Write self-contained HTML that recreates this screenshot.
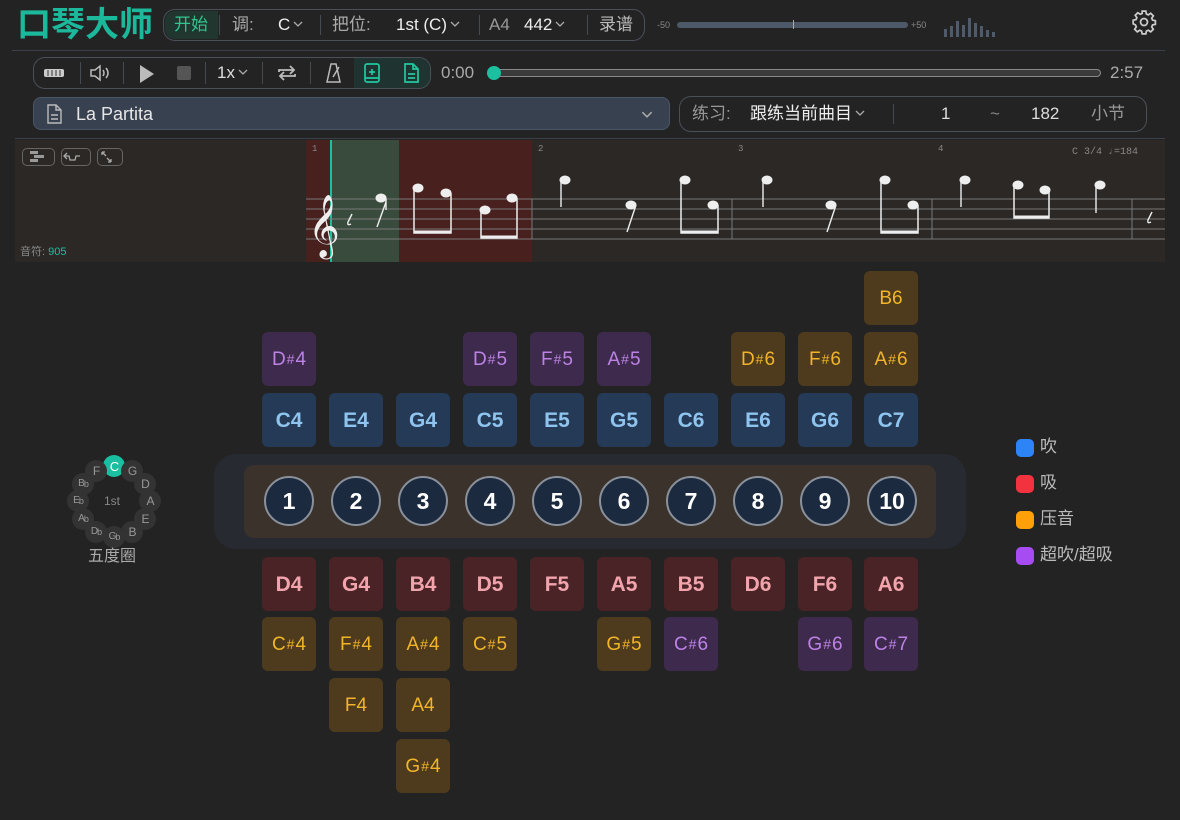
<!DOCTYPE html>
<html><head><meta charset="utf-8"><style>
*{margin:0;padding:0;box-sizing:border-box}
body{width:1180px;height:820px;background:#232323;font-family:"Liberation Sans","Noto Sans CJK SC",sans-serif;color:#ddd;position:relative;overflow:hidden}
.a{position:absolute}
.k{position:absolute;width:54px;height:54px;border-radius:6px;display:flex;align-items:center;justify-content:center;font-size:19px;line-height:1}
.k small{font-size:14px;margin:0 1px}
.b{background:#243a56;color:#8fc4ef;font-weight:bold;font-size:21px}
.d{background:#4a2327;color:#f2a4ad;font-weight:bold;font-size:21px}
.o{background:#4e3b1d;color:#f2b52a}
.p{background:#3e2a4d;color:#bd82e6}
.h{position:absolute;width:50px;height:50px;border-radius:50%;background:#1c2a3f;border:2px solid #8a919b;color:#fff;font-weight:bold;font-size:23px;display:flex;align-items:center;justify-content:center;top:476px}
.pill{position:absolute;border:1px solid #4a4f58;border-radius:12px}
.sep{position:absolute;width:1px;background:#444a52}
.t{position:absolute;white-space:nowrap;line-height:20px}
.cf{position:absolute;width:22px;height:22px;border-radius:50%;background:#333;color:#999;font-size:12px;display:flex;align-items:center;justify-content:center;line-height:1;letter-spacing:-1px}
.cf i{font-style:normal;font-size:9px}
.cv{display:inline-block;width:10px;height:6px;vertical-align:middle;margin-left:3px;margin-top:-3px}
</style></head><body>
<svg width="0" height="0" style="position:absolute"><defs><symbol id="cv" viewBox="0 0 10 6"><path d="M1 1l4 4 4-4" fill="none" stroke="#aaa" stroke-width="1.3"/></symbol></defs></svg>
<div class="t" style="left:17px;top:7px;font-size:34px;line-height:36px;font-weight:bold;color:#1cb89b">口琴大师</div>
<div class="pill" style="left:163px;top:9px;width:482px;height:32px"></div>
<div class="a" style="left:165px;top:11px;width:53px;height:28px;background:#20362e;border-radius:10px 0 0 10px"></div>
<div class="t" style="left:174px;top:15px;font-size:17px;color:#2fc591">开始</div>
<div class="sep" style="left:219px;top:15px;height:20px"></div>
<div class="t" style="left:232px;top:15px;font-size:17px;color:#aaa">调:</div>
<div class="t" style="left:278px;top:15px;font-size:17px;color:#eee">C<svg class="cv"><use href="#cv"/></svg></div>
<div class="sep" style="left:320px;top:15px;height:20px"></div>
<div class="t" style="left:332px;top:15px;font-size:17px;color:#aaa">把位:</div>
<div class="t" style="left:396px;top:15px;font-size:17px;color:#eee">1st (C)<svg class="cv"><use href="#cv"/></svg></div>
<div class="sep" style="left:479px;top:15px;height:20px"></div>
<div class="t" style="left:489px;top:15px;font-size:17px;color:#999">A4</div>
<div class="t" style="left:524px;top:15px;font-size:17px;color:#eee">442<svg class="cv"><use href="#cv"/></svg></div>
<div class="sep" style="left:587px;top:15px;height:20px"></div>
<div class="t" style="left:599px;top:15px;font-size:17px;color:#bbb">录谱</div>
<div class="t" style="left:657px;top:15px;font-size:9px;color:#888">-50</div>
<div class="a" style="left:677px;top:22px;width:231px;height:6px;background:#4d5869;border-radius:3px"></div>
<div class="a" style="left:793px;top:20px;width:1px;height:9px;background:#aaa"></div>
<div class="t" style="left:911px;top:15px;font-size:9px;color:#888">+50</div>
<svg class="a" style="left:942px;top:17px" width="56" height="20"><g fill="#4f5a6a"><rect x="2" y="12" width="3" height="8"/><rect x="8" y="9" width="3" height="11"/><rect x="14" y="4" width="3" height="16"/><rect x="20" y="8" width="3" height="12"/><rect x="26" y="1" width="3" height="19"/><rect x="32" y="6" width="3" height="14"/><rect x="38" y="9" width="3" height="11"/><rect x="44" y="13" width="3" height="7"/><rect x="50" y="15" width="3" height="5"/></g></svg>
<svg class="a" style="left:1131px;top:9px" width="26" height="26" viewBox="0 0 24 24" fill="none" stroke="#ccc" stroke-width="1.6"><path d="M10.3 2h3.4l.5 2.6 1.8.8 2.2-1.5 2.4 2.4-1.5 2.2.8 1.8 2.6.5v3.4l-2.6.5-.8 1.8 1.5 2.2-2.4 2.4-2.2-1.5-1.8.8-.5 2.6h-3.4l-.5-2.6-1.8-.8-2.2 1.5-2.4-2.4 1.5-2.2-.8-1.8L2 13.7v-3.4l2.6-.5.8-1.8-1.5-2.2 2.4-2.4 2.2 1.5 1.8-.8z"/><circle cx="12" cy="12" r="3.2"/></svg>
<div class="a" style="left:12px;top:50px;width:1153px;height:1px;background:#3a404a"></div>

<div class="pill" style="left:33px;top:57px;width:398px;height:32px"></div>
<div class="a" style="left:354px;top:58px;width:76px;height:30px;background:#1f3430;border-radius:0 11px 11px 0"></div>
<svg class="a" style="left:43px;top:67px" width="22" height="12"><rect x="1" y="2" width="20" height="8" rx="2" fill="#ccc"/><g stroke="#333"><line x1="5" y1="3" x2="5" y2="9"/><line x1="9" y1="3" x2="9" y2="9"/><line x1="13" y1="3" x2="13" y2="9"/><line x1="17" y1="3" x2="17" y2="9"/></g></svg>
<div class="sep" style="left:80px;top:62px;height:22px"></div>
<svg class="a" style="left:88px;top:63px" width="24" height="20" fill="none" stroke="#bbb" stroke-width="1.5"><path d="M3 7h4l5-4v14l-5-4H3z"/><path d="M15 7q2 3 0 6M18 5q4 5 0 10"/></svg>
<div class="sep" style="left:123px;top:62px;height:22px"></div>
<svg class="a" style="left:138px;top:64px" width="18" height="20"><path d="M2 1L16 10L2 19Z" fill="#bbb"/></svg>
<div class="a" style="left:177px;top:66px;width:14px;height:14px;background:#555;border-radius:2px"></div>
<div class="sep" style="left:205px;top:62px;height:22px"></div>
<div class="t" style="left:217px;top:63px;font-size:17px;color:#ddd">1x<svg class="cv"><use href="#cv"/></svg></div>
<div class="sep" style="left:262px;top:62px;height:22px"></div>
<svg class="a" style="left:276px;top:63px" width="22" height="20" fill="none" stroke="#bbb" stroke-width="1.8"><path d="M3 9V7h14M14 3l4 4-4 4M19 11v2H5M8 17l-4-4 4-4"/></svg>
<div class="sep" style="left:310px;top:62px;height:22px"></div>
<svg class="a" style="left:325px;top:62px" width="18" height="22" fill="none" stroke="#bbb" stroke-width="1.5"><path d="M6 2h5l4 18H2z"/><path d="M8 15l6-10"/></svg>
<svg class="a" style="left:362px;top:62px" width="20" height="22" fill="none" stroke="#22c8a0" stroke-width="1.7"><rect x="3" y="2" width="14" height="18" rx="2"/><path d="M10 7v6M7 10h6M3 16h14"/></svg>
<svg class="a" style="left:401px;top:62px" width="20" height="22" fill="none" stroke="#22c8a0" stroke-width="1.7"><path d="M4 2h8l5 5v13H4z M12 2v5h5M7 12h7M7 16h7"/></svg>
<div class="t" style="left:441px;top:63px;font-size:17px;color:#aaa">0:00</div>
<div class="a" style="left:489px;top:69px;width:612px;height:8px;border:1.5px solid #888;border-radius:4px;background:#3a3a3a"></div>
<div class="a" style="left:487px;top:66px;width:14px;height:14px;border-radius:50%;background:#1cc0a0"></div>
<div class="t" style="left:1110px;top:63px;font-size:17px;color:#aaa">2:57</div>

<div class="a" style="left:33px;top:97px;width:637px;height:33px;background:#38414f;border:1px solid #4a5566;border-radius:8px"></div>
<svg class="a" style="left:45px;top:104px" width="18" height="20" fill="none" stroke="#bbb" stroke-width="1.4"><path d="M3 1h8l5 5v13H3z M11 1v5h5M6 11h7M6 15h7"/></svg>
<div class="t" style="left:76px;top:104px;font-size:18px;color:#e6e6e6">La Partita</div>
<svg class="a" style="left:641px;top:111px" width="12" height="7"><use href="#cv"/></svg>
<div class="pill" style="left:679px;top:96px;width:468px;height:36px"></div>
<div class="t" style="left:692px;top:104px;font-size:17px;color:#999">练习:</div>
<div class="t" style="left:750px;top:104px;font-size:17px;color:#eee">跟练当前曲目<svg class="cv"><use href="#cv"/></svg></div>
<div class="sep" style="left:893px;top:104px;height:20px"></div>
<div class="t" style="left:941px;top:104px;font-size:17px;color:#ddd">1</div>
<div class="t" style="left:990px;top:104px;font-size:17px;color:#888">~</div>
<div class="t" style="left:1031px;top:104px;font-size:17px;color:#ddd">182</div>
<div class="t" style="left:1091px;top:104px;font-size:17px;color:#999">小节</div>
<div class="a" style="left:15px;top:138px;width:1150px;height:1px;background:#3a404a"></div>

<div class="a" style="left:15px;top:140px;width:1150px;height:122px;background:#2b2826"></div>
<div class="a" style="left:306px;top:140px;width:25px;height:122px;background:#48211f"></div>
<div class="a" style="left:331px;top:140px;width:68px;height:122px;background:#394b3c"></div>
<div class="a" style="left:399px;top:140px;width:133px;height:122px;background:#48211f"></div>
<div class="a" style="left:330px;top:140px;width:2px;height:122px;background:#1cc0a0"></div>
<div class="a" style="left:22px;top:148px;width:33px;height:18px;border:1px solid #666;border-radius:5px"></div>
<div class="a" style="left:61px;top:148px;width:30px;height:18px;border:1px solid #666;border-radius:5px"></div>
<div class="a" style="left:97px;top:148px;width:26px;height:18px;border:1px solid #666;border-radius:5px"></div>
<svg class="a" style="left:22px;top:148px" width="102" height="18" fill="none" stroke="#aaa" stroke-width="1.3"><g fill="#999" stroke="none"><rect x="8" y="3" width="8" height="3"/><rect x="12" y="7" width="10" height="3"/><rect x="8" y="11" width="8" height="3"/></g><path d="M45 5l-3 3 3 3M42 8h5l1 4h5l1-4h4"/><path d="M80 4h3M80 4v3M80 4l4 4M89 14h-3M89 14v-3M89 14l-4-4"/></svg>
<div class="t" style="left:20px;top:242px;font-size:11px;color:#888">音符: <span style="color:#1cc0a0">905</span></div>
<svg class="a" style="left:300px;top:140px" width="865" height="122">
<g stroke="#777" stroke-width="1"><line x1="6" y1="59" x2="865" y2="59"/><line x1="6" y1="69" x2="865" y2="69"/><line x1="6" y1="79" x2="865" y2="79"/><line x1="6" y1="89" x2="865" y2="89"/><line x1="6" y1="99" x2="865" y2="99"/>
<line x1="232" y1="59" x2="232" y2="99"/><line x1="432" y1="59" x2="432" y2="99"/><line x1="632" y1="59" x2="632" y2="99"/><line x1="832" y1="59" x2="832" y2="99"/></g>
<g fill="#888" font-size="9" font-family="Liberation Mono"><text x="12" y="11">1</text><text x="238" y="11">2</text><text x="438" y="11">3</text><text x="638" y="11">4</text><text x="772" y="14" font-size="10">C  3/4  ♩=184</text></g>
<text x="8" y="104" font-size="54" fill="#eee" font-family="DejaVu Serif">𝄞</text>
<g fill="#eee" stroke="#eee">
<path d="M52 74l-4 8q-1 4 3 2" fill="none" stroke-width="1.4"/>
<ellipse cx="81" cy="58" rx="5" ry="4"/><line x1="86" y1="58" x2="86" y2="70" stroke-width="1.4"/><line x1="86" y1="62" x2="77" y2="87" stroke-width="1.4"/>
<ellipse cx="118" cy="48" rx="5" ry="4"/><ellipse cx="146" cy="53" rx="5" ry="4"/><path d="M114 48V93H151V53" fill="none" stroke-width="1.5"/><line x1="114" y1="92" x2="151" y2="92" stroke-width="3"/>
<ellipse cx="185" cy="70" rx="5" ry="4"/><ellipse cx="212" cy="58" rx="5" ry="4"/><path d="M181 70V98H217V58" fill="none" stroke-width="1.5"/><line x1="181" y1="97" x2="217" y2="97" stroke-width="3"/>
<ellipse cx="265" cy="40" rx="5" ry="4"/><line x1="261" y1="40" x2="261" y2="67" stroke-width="1.4"/>
<ellipse cx="331" cy="65" rx="5" ry="4"/><line x1="336" y1="65" x2="327" y2="92" stroke-width="1.4"/>
<ellipse cx="385" cy="40" rx="5" ry="4"/><ellipse cx="413" cy="65" rx="5" ry="4"/><path d="M381 40V93H418V65" fill="none" stroke-width="1.5"/><line x1="381" y1="92" x2="418" y2="92" stroke-width="3"/>
<ellipse cx="467" cy="40" rx="5" ry="4"/><line x1="463" y1="40" x2="463" y2="67" stroke-width="1.4"/>
<ellipse cx="531" cy="65" rx="5" ry="4"/><line x1="536" y1="65" x2="527" y2="92" stroke-width="1.4"/>
<ellipse cx="585" cy="40" rx="5" ry="4"/><ellipse cx="613" cy="65" rx="5" ry="4"/><path d="M581 40V93H618V65" fill="none" stroke-width="1.5"/><line x1="581" y1="92" x2="618" y2="92" stroke-width="3"/>
<ellipse cx="665" cy="40" rx="5" ry="4"/><line x1="661" y1="40" x2="661" y2="67" stroke-width="1.4"/>
<ellipse cx="718" cy="45" rx="5" ry="4"/><ellipse cx="745" cy="50" rx="5" ry="4"/><path d="M714 45V78H749V50" fill="none" stroke-width="1.5"/><line x1="714" y1="77" x2="749" y2="77" stroke-width="3"/>
<ellipse cx="800" cy="45" rx="5" ry="4"/><line x1="796" y1="45" x2="796" y2="73" stroke-width="1.4"/>
<path d="M852 72l-4 8q-1 4 3 2" fill="none" stroke-width="1.4"/>
</g></svg>

<div class="cf" style="left:103px;top:455px;background:#19bfa0;color:#fff;font-size:13px">C</div>
<div class="cf" style="left:121px;top:460px">G</div>
<div class="cf" style="left:134px;top:473px">D</div>
<div class="cf" style="left:139px;top:490px">A</div>
<div class="cf" style="left:134px;top:508px">E</div>
<div class="cf" style="left:121px;top:521px">B</div>
<div class="cf" style="left:103px;top:526px;font-size:10px">G<i>b</i></div>
<div class="cf" style="left:85px;top:521px;font-size:10px">D<i>b</i></div>
<div class="cf" style="left:72px;top:508px;font-size:10px">A<i>b</i></div>
<div class="cf" style="left:67px;top:490px;font-size:10px">E<i>b</i></div>
<div class="cf" style="left:72px;top:473px;font-size:10px">B<i>b</i></div>
<div class="cf" style="left:85px;top:460px">F</div>
<div class="t" style="left:104px;top:491px;font-size:12px;color:#888">1st</div>
<div class="t" style="left:88px;top:547px;font-size:16px;color:#aaa">五度圈</div>

<div class="a" style="left:214px;top:454px;width:752px;height:95px;background:#272a30;border-radius:22px"></div>
<div class="a" style="left:244px;top:465px;width:692px;height:73px;background:#3a322b;border-radius:10px"></div>
<div class="h" style="left:264px">1</div><div class="h" style="left:331px">2</div><div class="h" style="left:398px">3</div><div class="h" style="left:465px">4</div><div class="h" style="left:532px">5</div><div class="h" style="left:599px">6</div><div class="h" style="left:666px">7</div><div class="h" style="left:733px">8</div><div class="h" style="left:800px">9</div><div class="h" style="left:867px">10</div>

<div class="k o" style="left:864px;top:271px">B6</div>
<div class="k p" style="left:262px;top:332px">D<small>#</small>4</div>
<div class="k p" style="left:463px;top:332px">D<small>#</small>5</div>
<div class="k p" style="left:530px;top:332px">F<small>#</small>5</div>
<div class="k p" style="left:597px;top:332px">A<small>#</small>5</div>
<div class="k o" style="left:731px;top:332px">D<small>#</small>6</div>
<div class="k o" style="left:798px;top:332px">F<small>#</small>6</div>
<div class="k o" style="left:864px;top:332px">A<small>#</small>6</div>
<div class="k b" style="left:262px;top:393px">C4</div><div class="k b" style="left:329px;top:393px">E4</div><div class="k b" style="left:396px;top:393px">G4</div><div class="k b" style="left:463px;top:393px">C5</div><div class="k b" style="left:530px;top:393px">E5</div><div class="k b" style="left:597px;top:393px">G5</div><div class="k b" style="left:664px;top:393px">C6</div><div class="k b" style="left:731px;top:393px">E6</div><div class="k b" style="left:798px;top:393px">G6</div><div class="k b" style="left:864px;top:393px">C7</div>
<div class="k d" style="left:262px;top:557px">D4</div><div class="k d" style="left:329px;top:557px">G4</div><div class="k d" style="left:396px;top:557px">B4</div><div class="k d" style="left:463px;top:557px">D5</div><div class="k d" style="left:530px;top:557px">F5</div><div class="k d" style="left:597px;top:557px">A5</div><div class="k d" style="left:664px;top:557px">B5</div><div class="k d" style="left:731px;top:557px">D6</div><div class="k d" style="left:798px;top:557px">F6</div><div class="k d" style="left:864px;top:557px">A6</div>
<div class="k o" style="left:262px;top:617px">C<small>#</small>4</div><div class="k o" style="left:329px;top:617px">F<small>#</small>4</div><div class="k o" style="left:396px;top:617px">A<small>#</small>4</div><div class="k o" style="left:463px;top:617px">C<small>#</small>5</div><div class="k o" style="left:597px;top:617px">G<small>#</small>5</div><div class="k p" style="left:664px;top:617px">C<small>#</small>6</div><div class="k p" style="left:798px;top:617px">G<small>#</small>6</div><div class="k p" style="left:864px;top:617px">C<small>#</small>7</div>
<div class="k o" style="left:329px;top:678px">F4</div><div class="k o" style="left:396px;top:678px">A4</div>
<div class="k o" style="left:396px;top:739px">G<small>#</small>4</div>

<div class="a" style="left:1016px;top:439px;width:18px;height:18px;border-radius:5px;background:#2d84f7"></div>
<div class="t" style="left:1040px;top:437px;font-size:17px;color:#bbb">吹</div>
<div class="a" style="left:1016px;top:475px;width:18px;height:18px;border-radius:5px;background:#f2333f"></div>
<div class="t" style="left:1040px;top:473px;font-size:17px;color:#bbb">吸</div>
<div class="a" style="left:1016px;top:511px;width:18px;height:18px;border-radius:5px;background:#ff9f0a"></div>
<div class="t" style="left:1040px;top:509px;font-size:17px;color:#bbb">压音</div>
<div class="a" style="left:1016px;top:547px;width:18px;height:18px;border-radius:5px;background:#a74cf2"></div>
<div class="t" style="left:1040px;top:545px;font-size:17px;color:#bbb">超吹/超吸</div>
</body></html>
